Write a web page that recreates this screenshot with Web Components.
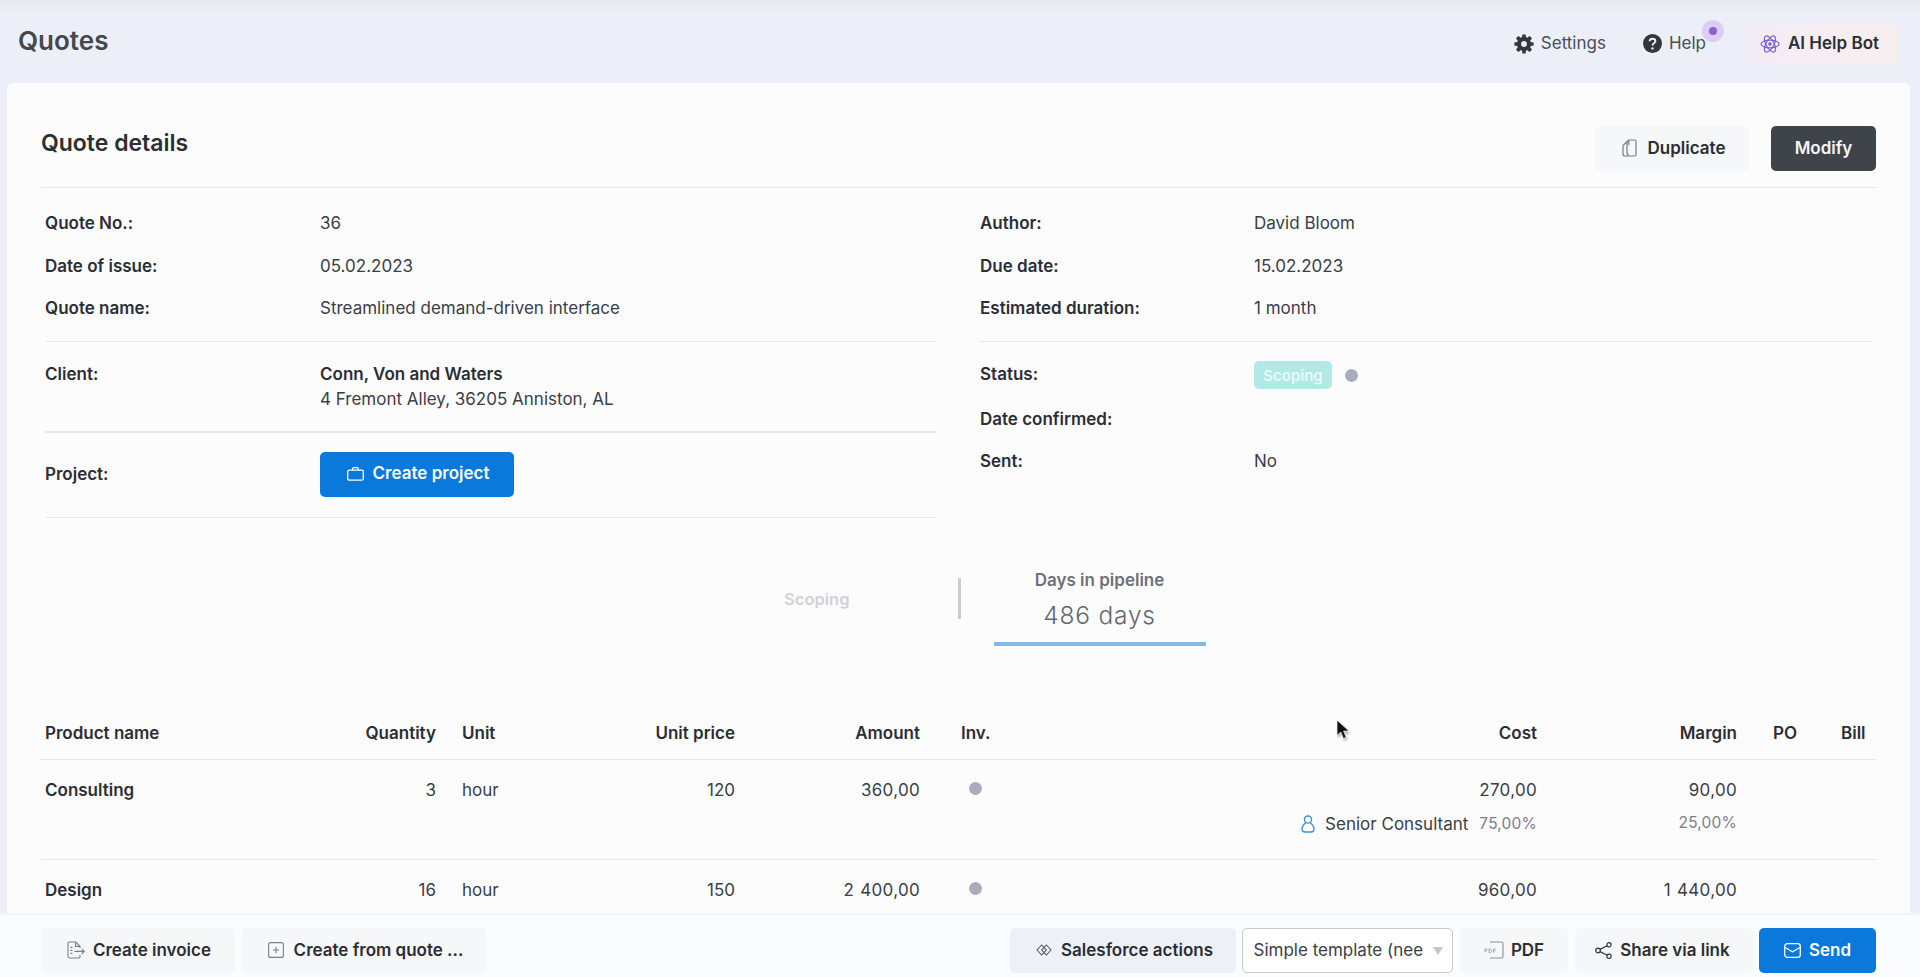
<!DOCTYPE html>
<html lang="en"><head><meta charset="utf-8"><title>Quotes</title>
<style>
html,body{margin:0;height:100%;overflow:hidden}
body{font-family:Inter,"Liberation Sans",sans-serif;background:#eceff8;color:#33373d;font-size:17px}
</style></head>
<body>
<q-app></q-app>
<script>
const icons={
gear:`<svg width="20" height="20" viewBox="0 0 20 20"><g fill="#33373d"><circle cx="10" cy="10" r="7.2"/>${[0,45,90,135,180,225,270,315].map(a=>`<rect x="8.2" y="0.4" width="3.6" height="4" rx=".6" transform="rotate(${a} 10 10)"/>`).join('')}</g><circle cx="10" cy="10" r="2.9" fill="#eceff8"/></svg>`,
help:`<svg width="19" height="19" viewBox="0 0 19 19"><circle cx="9.5" cy="9.5" r="9.5" fill="#33373d"/><path d="M6.6 7.3c0-1.7 1.3-2.6 2.9-2.6s2.9.9 2.9 2.4c0 2.2-2.9 2.1-2.9 4.3" fill="none" stroke="#eceff8" stroke-width="1.9"/><circle cx="9.5" cy="14.4" r="1.2" fill="#eceff8"/></svg>`,
atom:`<svg width="20" height="20" viewBox="0 0 20 20" fill="none" stroke="#7d5fc9" stroke-width="1.2"><ellipse cx="10" cy="10" rx="9" ry="3.9"/><ellipse cx="10" cy="10" rx="9" ry="3.9" transform="rotate(60 10 10)"/><ellipse cx="10" cy="10" rx="9" ry="3.9" transform="rotate(120 10 10)"/><circle cx="10" cy="10" r="1.8" fill="#7d5fc9" stroke="none"/></svg>`,
copy:`<svg width="15" height="18" viewBox="0 0 15 18" fill="none" stroke="#777c84" stroke-width="1.2"><path d="M1 6.5 5 2.6V13.8c0 1.2.8 2 1.9 2"/><path d="M5 2.6 6.8 1h5.4c1 0 1.8.8 1.8 1.8v12.4c0 1-.8 1.8-1.8 1.8H3c-1.1 0-2-.9-2-2V6.5"/><path d="M6.8 1v5.2"/></svg>`,
bag:`<svg width="17" height="14" viewBox="0 0 17 14" fill="none" stroke="#fff" stroke-width="1.3"><rect x=".7" y="3.2" width="15.6" height="10" rx="1.4"/><path d="M5.6 3.2V1.9c0-.7.5-1.2 1.2-1.2h3.4c.7 0 1.2.5 1.2 1.2v1.3"/></svg>`,
invoice:`<svg width="18" height="18" viewBox="0 0 18 18" fill="none" stroke="#7c8087" stroke-width="1.1"><path d="M13 7V5.2L8.8 1H2.2C1.5 1 1 1.5 1 2.2v13.6c0 .7.5 1.2 1.2 1.2h9.6c.7 0 1.2-.5 1.2-1.2V14"/><path d="M8.6 1v4.4H13"/><path d="M3.4 6.4h2M3.4 9.4h2M3.4 12.4h2"/><path d="M7.5 10.4h10M14.6 7.8l2.8 2.6-2.8 2.6"/></svg>`,
plusbox:`<svg width="16" height="16" viewBox="0 0 16 16" fill="none" stroke="#7c8087" stroke-width="1.1"><rect x=".6" y=".6" width="14.8" height="14.8" rx="2"/><path d="M8 5v6M5 8h6"/></svg>`,
sf:`<svg width="16" height="12" viewBox="0 0 16 12" fill="none" stroke="#5c6168" stroke-width="1.1"><path d="M5.6 1 1 6l4.6 5L8 8.4 5.6 6 8 3.600Z"/><path d="M10.400 1 15 6l-4.600 5L8 8.400 10.400 6 8 3.600Z"/></svg>`,
pdf:`<svg width="20" height="18" viewBox="0 0 20 18" fill="none"><path d="M6 1h11.500c.8 0 1.500.7 1.500 1.500v13c0 .8-.7 1.500-1.500 1.500H6" stroke="#8d9198" stroke-width="1.100"/><path d="M1 8v-3M1 5h1.400c1.100 0 1.100 1.700 0 1.700H1M5 5v3.700h1c2 0 2-3.700 0-3.700H5M9.400 8.800V5h2.400M9.400 6.800h2" transform="translate(0 3)" stroke="#9a9ea5" stroke-width=".9"/></svg>`,
share:`<svg width="17" height="17" viewBox="0 0 17 17" fill="none" stroke="#33373d" stroke-width="1.200"><circle cx="3" cy="8.500" r="2.300"/><circle cx="14" cy="2.800" r="2.100"/><circle cx="14" cy="14.200" r="2.100"/><path d="M5 7.400l7.200-3.700M5 9.600l7.200 3.700"/></svg>`,
mail:`<svg width="17" height="15" viewBox="0 0 17 15" fill="none" stroke="#fff" stroke-width="1.300"><rect x=".7" y=".7" width="15.600" height="13.600" rx="2.600"/><path d="M1 4.500l7.500 4.300L16 4.500"/></svg>`,
person:`<svg width="14" height="18" viewBox="0 0 14 18" fill="none" stroke="#3d8fd6" stroke-width="1.300"><circle cx="7" cy="4.600" r="3.600"/><path d="M4.800 7.600C2.600 9.400 1 11.500 1 14c0 2 1.300 3 3 3h6c1.700 0 3-1 3-3 0-2.500-1.600-4.600-3.800-6.400"/></svg>`
};

class QBtn extends HTMLElement{
  constructor(){super();this.attachShadow({mode:'open'}).innerHTML=`<style>
  :host{display:inline-flex;align-items:center;justify-content:center;gap:var(--gap,8px);height:45px;padding:0 var(--pr,0px) 1px var(--pl,0px);box-sizing:border-box;border-radius:5px;font:600 17px/1 Inter,"Liberation Sans",sans-serif;white-space:nowrap;background:#f6f7f9;color:#2b2e33;flex:none}
  :host([kind=primary]){background:#0b78dc;color:#fbfdff}
  :host([kind=dark]){background:#3f444b;color:#f5f6f7}
  :host([kind=soft]){background:#eef0f8}
  ::slotted(svg){display:block;flex:none}
  </style><slot name="icon"></slot><slot></slot>`}
  connectedCallback(){const n=this.getAttribute('icon');if(n&&!this.querySelector('svg')){const t=document.createElement('template');t.innerHTML=icons[n];const s=t.content.firstChild;s.setAttribute('slot','icon');this.prepend(s)}}
}
customElements.define('q-btn',QBtn);

class QField extends HTMLElement{
  constructor(){super();this.attachShadow({mode:'open'}).innerHTML=`<style>
  :host{display:grid;grid-template-columns:var(--lab,275px) 1fr;align-items:center;min-height:42.5px;font:400 17px/25px Inter,"Liberation Sans",sans-serif;color:#3a3e45}
  .l{font-weight:600;color:#2b2e33}
  :host([top]){align-items:start}
  </style><div class="l"></div><div><slot></slot></div>`}
  connectedCallback(){this.shadowRoot.querySelector('.l').textContent=this.getAttribute('label')}
}
customElements.define('q-field',QField);

class QTopbar extends HTMLElement{
  constructor(){super();this.attachShadow({mode:'open'}).innerHTML=`<style>
  :host{display:flex;align-items:center;height:83px;box-sizing:border-box;padding:4px 22px 0 18px;background:linear-gradient(#e8e9ed 0,#eceff8 14px);flex:none}
  h1{margin:-6px 0 0;font:600 26px/1 Inter,"Liberation Sans",sans-serif;color:#43474e;flex:1}
  .n{display:flex;align-items:center;gap:7px;font:400 17px/1 Inter,"Liberation Sans",sans-serif;color:#4a4e55}
  .n svg{display:block}
  .set{margin-right:37px}
  .help{position:relative;margin-right:39px}
  .dot{position:absolute;left:59px;top:-14px;width:22px;height:22px;border-radius:50%;background:#dccdf7;display:flex;align-items:center;justify-content:center}
  .dot i{width:8px;height:8px;border-radius:50%;background:#8a62cf}
  .ai{display:flex;align-items:center;gap:8px;height:42px;width:153px;box-sizing:border-box;padding-left:15px;border-radius:5px;background:linear-gradient(90deg,#f3ecf7,#f7efee);font:600 17px/1 Inter,"Liberation Sans",sans-serif;color:#2b2e33}
  </style><h1>Quotes</h1>
  <div class="n set">${icons.gear}<span>Settings</span></div>
  <div class="n help">${icons.help}<span>Help</span><div class="dot"><i></i></div></div>
  <div class="ai">${icons.atom}<span>AI Help Bot</span></div>`}
}
customElements.define('q-topbar',QTopbar);

class QDetails extends HTMLElement{
  constructor(){super();this.attachShadow({mode:'open'}).innerHTML=`<style>
  :host{display:grid;grid-template-columns:892px 893px;column-gap:43px;padding:0 3px 0 4px;color:#3a3e45}
  hr{border:0;margin:0;height:1.500px;background:#e5e7ee}
  .first{padding:14.500px 0 10.500px}
  .client{padding:20px 0 19px}
  .proj{padding:19px 0 20px}
  .status{padding:17px 0 0}
  .status q-field{min-height:28px;margin-bottom:9px}
  b{font-weight:600;color:#2b2e33}
  .chip-row{display:flex;align-items:center;gap:13px;margin-top:2px}
  .chip{display:inline-flex;align-items:center;height:28px;width:78px;justify-content:center;border-radius:5px;background:#b2e8e6;color:#e7f9f8;font:600 15px/1 Inter,"Liberation Sans",sans-serif}
  .dot{width:13px;height:13px;border-radius:50%;background:#a9adbb}
  q-btn{width:194px;--gap:9px;--pl:2px}
  </style>
  <div>
    <div class="first"><q-field label="Quote No.:">36</q-field><q-field label="Date of issue:">05.02.2023</q-field><q-field label="Quote name:">Streamlined demand-driven interface</q-field></div>
    <hr>
    <div class="client"><q-field top label="Client:"><b>Conn, Von and Waters</b><br>4 Fremont Alley, 36205 Anniston, AL</q-field></div>
    <hr>
    <div class="proj"><q-field label="Project:"><q-btn kind="primary" icon="bag">Create project</q-btn></q-field></div>
    <hr>
  </div>
  <div style="--lab:274px">
    <div class="first"><q-field label="Author:">David Bloom</q-field><q-field label="Due date:">15.02.2023</q-field><q-field label="Estimated duration:">1 month</q-field></div>
    <hr style="margin-right:1px">
    <div class="status"><q-field label="Status:"><div class="chip-row"><span class="chip">Scoping</span><span class="dot"></span></div></q-field>
    <q-field label="Date confirmed:" style="min-height:42.500px;margin:0"></q-field><q-field label="Sent:" style="min-height:42.500px;margin:0">No</q-field></div>
  </div>`}
}
customElements.define('q-details',QDetails);

class QPipeline extends HTMLElement{
  constructor(){super();this.attachShadow({mode:'open'}).innerHTML=`<style>
  :host{display:grid;grid-template-columns:1fr 1fr;padding-top:52px}
  .l{display:flex;justify-content:flex-end;align-items:flex-start;margin-right:-2px}
  .s{font:600 16.500px/42px Inter,"Liberation Sans",sans-serif;color:#cfd2d9;padding-right:108px;border-right:3px solid #c9cdd3;height:41px;margin-top:8px}
  .r{padding-left:35px}
  .b{width:212px;text-align:center}
  .t{font:600 17px/20px Inter,"Liberation Sans",sans-serif;color:#6d7179}
  .v{font:300 24.500px/30px Inter,"Liberation Sans",sans-serif;letter-spacing:.8px;color:#63676f;margin:10px 0 12px}
  .u{height:4px;background:#86b8e8}
  </style><div class="l"><div class="s">Scoping</div></div><div class="r"><div class="b"><div class="t">Days in pipeline</div><div class="v">486 days</div><div class="u"></div></div></div>`}
}
customElements.define('q-pipeline',QPipeline);

class QTable extends HTMLElement{
  constructor(){super();
    const head=['Product name','Quantity','Unit','Unit price','Amount','Inv.','Cost','Margin','PO','Bill'];
    const rows=[['Consulting','3','hour','120','360,00','270,00','90,00',true],['Design','16','hour','150','2 400,00','960,00','1 440,00',false]];
    const cells=c=>c.map((t,i)=>`<div class="c${i}">${t}</div>`).join('');
    this.attachShadow({mode:'open'}).innerHTML=`<style>
    :host{display:block;margin-top:61px;font:400 17px/20px Inter,"Liberation Sans",sans-serif;color:#3a3e45}
    .g{display:grid;grid-template-columns:305px 86px 164px 135px 185px 81px 536px 200px 104px 1fr;padding-left:4px;border-bottom:1.500px solid #e3e5ec}
    .h{font-weight:600;color:#2b2e33;height:53px;padding-bottom:1px;box-sizing:border-box;align-items:center}
    .r{padding-top:20px;height:99.500px;box-sizing:border-box;align-content:start}
    .c0{font-weight:600;color:#2b2e33;white-space:nowrap}
    .c1,.c3,.c4,.c6,.c7{text-align:right}
    .r .c4,.r .c6,.r .c7{letter-spacing:.3px;word-spacing:1px}
    .c2{padding-left:26px}.c5{padding-left:41px}.c8{padding-left:36px}
    .dot{display:block;width:13px;height:13px;border-radius:50%;background:#a9adbb;margin:2px 0 0 8px}
    .s7,.s6{margin-top:14px;white-space:nowrap}
    .s6{grid-column:7;display:flex;justify-content:flex-end;align-items:center;gap:9px}
    .s6 svg{display:block;margin-right:1px}
    .s6 span.p,.s7{font-size:15.500px;color:#7b7f86;letter-spacing:.2px}
    .s6 span.n{margin-right:2px}
    .s7{grid-column:8;text-align:right;margin-top:13px}
    </style>
    <div class="g h">${cells(head)}</div>
    ${rows.map(r=>`<div class="g r">${cells([r[0],r[1],r[2],r[3],r[4],'<span class="dot"></span>',r[5],r[6]])}${r[7]?`<div class="s6">${icons.person}<span class="n">Senior Consultant</span><span class="p">75,00%</span></div><div class="s7">25,00%</div>`:''}</div>`).join('')}`}
}
customElements.define('q-table',QTable);

class QCard extends HTMLElement{
  constructor(){super();this.attachShadow({mode:'open'}).innerHTML=`<style>
  :host{display:block;flex:1;min-height:0;margin:0 10px 0 7px;padding:0 34px;border-radius:6px 6px 0 0;background:#fcfcfd;overflow:hidden}
  header{display:flex;align-items:center;gap:22px;padding:43px 0 16px;border-bottom:1.500px solid #e3e5ec}
  h2{flex:1;margin:-11px 0 0;font:600 23px/1 Inter,"Liberation Sans",sans-serif;color:#2b2e33}
  </style><header><h2>Quote details</h2><q-btn icon="copy" style="width:154px;--gap:11px;--pl:3px">Duplicate</q-btn><q-btn kind="dark" style="width:105px">Modify</q-btn></header>
  <q-details></q-details><q-pipeline></q-pipeline><q-table></q-table>`}
}
customElements.define('q-card',QCard);

class QFooter extends HTMLElement{
  constructor(){super();this.attachShadow({mode:'open'}).innerHTML=`<style>
  :host{display:flex;align-items:flex-start;height:64px;box-sizing:border-box;padding:13px 44px 0 41px;gap:7px;background:#fbfcfd;border-top:2px solid #f4f5f9;flex:none}
  .sp{flex:1}
  .sel{display:flex;align-items:center;justify-content:space-between;width:211px;height:45px;box-sizing:border-box;padding:0 8px 1px 10.500px;border:1.500px solid #c6c9d1;border-radius:5px;background:#fff;font:400 17px/1 Inter,"Liberation Sans",sans-serif;color:#3a3e45;white-space:nowrap;flex:none}
  .sel i{width:0;height:0;border:5px solid transparent;border-top:8px solid #c4c7ce;border-bottom:0;margin:2px 1px 0 0}
  </style>
  <q-btn icon="invoice" style="width:194px;--pl:2px">Create invoice</q-btn>
  <q-btn icon="plusbox" style="width:244px;--gap:10px;--pl:3px">Create from quote ...</q-btn>
  <div class="sp"></div>
  <q-btn kind="soft" icon="sf" style="width:226px;--gap:9px;--pl:3px;margin-right:-1px">Salesforce actions</q-btn>
  <div class="sel"><span>Simple template (nee</span><i></i></div>
  <q-btn icon="pdf" style="width:108px;--gap:7px">PDF</q-btn>
  <q-btn icon="share" style="width:178px;--pr:3px">Share via link</q-btn>
  <q-btn kind="primary" icon="mail" style="width:117px;margin-left:-1px">Send</q-btn>`}
}
customElements.define('q-footer',QFooter);

class QApp extends HTMLElement{
  constructor(){super();this.attachShadow({mode:'open'}).innerHTML=`<style>
  :host{display:flex;flex-direction:column;height:977px;position:relative;overflow:hidden}
  svg.cur{position:absolute;left:1336px;top:719px;filter:drop-shadow(1px 2px 1px rgba(0,0,0,.3))}
  </style><q-topbar></q-topbar><q-card></q-card><q-footer></q-footer>
  <svg class="cur" width="14" height="22" viewBox="0 0 14 22"><path d="M1 1v15.500l3.800-3.400 2.600 6.400 2.800-1.200-2.600-6.200H13Z" fill="#111" stroke="#fff" stroke-width=".7"/></svg>`}
}
customElements.define('q-app',QApp);
</script>
</body></html>
